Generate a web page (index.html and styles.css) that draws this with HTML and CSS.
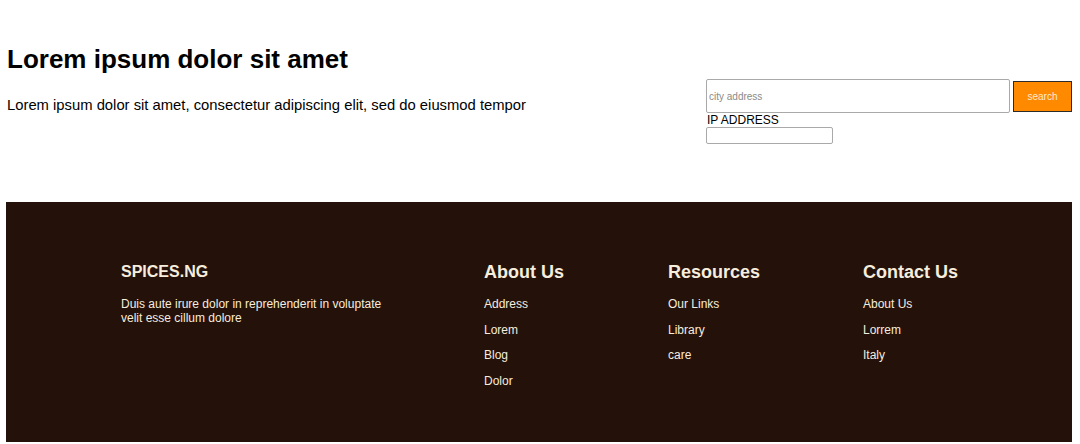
FILE: index.html
```html
<!DOCTYPE html>
<html lang="en">
<head>
<meta charset="utf-8">
<title>Spices.ng</title>
<link rel="stylesheet" href="styles.css">
</head>
<body>
  <section class="hero">
    <div class="hero-text">
      <h1 class="title">Lorem ipsum dolor sit amet</h1>
      <p class="lead">Lorem ipsum dolor sit amet, consectetur adipiscing elit, sed do eiusmod tempor</p>
    </div>
    <form class="search">
      <div class="search-row">
        <input class="city" type="text" placeholder="city address">
        <button class="btn" type="button">search</button>
      </div>
      <label class="ip-label">IP ADDRESS</label>
      <input class="ip" type="text">
    </form>
  </section>
  <footer class="footer">
    <div class="footer-grid">
      <div class="col brand">
        <h3 class="brand-name">SPICES.NG</h3>
        <p class="brand-desc">Duis aute irure dolor in reprehenderit in voluptate velit esse cillum dolore</p>
      </div>
      <div class="col">
        <h3 class="col-title">About Us</h3>
        <ul class="links">
          <li>Address</li>
          <li>Lorem</li>
          <li>Blog</li>
          <li>Dolor</li>
        </ul>
      </div>
      <div class="col">
        <h3 class="col-title">Resources</h3>
        <ul class="links">
          <li>Our Links</li>
          <li>Library</li>
          <li>care</li>
        </ul>
      </div>
      <div class="col">
        <h3 class="col-title">Contact Us</h3>
        <ul class="links">
          <li>About Us</li>
          <li>Lorrem</li>
          <li>Italy</li>
        </ul>
      </div>
    </div>
  </footer>
</body>
</html>
```
FILE: styles.css
```css
html, body {
  margin: 0;
  padding: 0;
  background: #fff;
}
body {
  font-family: "Liberation Sans", Arial, sans-serif;
  color: #000;
  padding: 0 8px 0 6px;
  min-height: 444px;
  box-sizing: border-box;
  width: 1080px;
}
.hero {
  display: flex;
  justify-content: space-between;
  align-items: flex-start;
  height: 202px;
}
.hero-text {
  padding-left: 1px;
}
.title {
  font-size: 26px;
  line-height: 30px;
  font-weight: 700;
  margin: 44px 0 0;
}
.lead {
  font-size: 14.8px;
  line-height: 18px;
  margin: 22px 0 0;
}
.search {
  width: 366px;
  margin-top: 79px;
  display: flex;
  flex-direction: column;
  align-items: flex-start;
}
.search-row {
  display: flex;
  align-items: center;
  gap: 3px;
  width: 100%;
}
.city {
  width: 304px;
  height: 34px;
  box-sizing: border-box;
  border: 1px solid #a9a9a9;
  border-radius: 2px;
  padding: 0 2px;
  font-family: "Liberation Sans", Arial, sans-serif;
  font-size: 10px;
  color: #333;
}
.city::placeholder {
  color: #8a8a8a;
}
.btn {
  width: 59px;
  height: 31px;
  box-sizing: border-box;
  background: #ff8a00;
  border: 1px solid #2b2b2b;
  border-radius: 0;
  color: #ffe9cc;
  font-family: "Liberation Sans", Arial, sans-serif;
  font-size: 10px;
  padding: 0;
}
.ip-label {
  font-size: 12px;
  line-height: 14px;
  margin-left: 1px;
}
.ip {
  width: 127px;
  height: 17px;
  box-sizing: border-box;
  border: 1px solid #a9a9a9;
  border-radius: 2px;
  padding: 0;
}
.footer {
  background: #23110a;
  height: 240px;
  padding-top: 59px;
  box-sizing: border-box;
  color: #f6eddd;
}
.footer-grid {
  display: grid;
  grid-template-columns: 363px 184px 195px auto;
  padding-left: 115px;
}
.col {
  display: flex;
  flex-direction: column;
}
.brand-name {
  margin: 0;
  font-size: 16px;
  line-height: 22px;
  font-weight: 700;
}
.brand-desc {
  margin: 14px 0 0;
  font-size: 12px;
  line-height: 14px;
  width: 270px;
}
.col-title {
  margin: 0;
  font-size: 18px;
  line-height: 22px;
  font-weight: 700;
}
.links {
  list-style: none;
  margin: 14px 0 0;
  padding: 0;
  display: flex;
  flex-direction: column;
  gap: 11px;
}
.links li {
  font-size: 12px;
  line-height: 14.5px;
}
```
